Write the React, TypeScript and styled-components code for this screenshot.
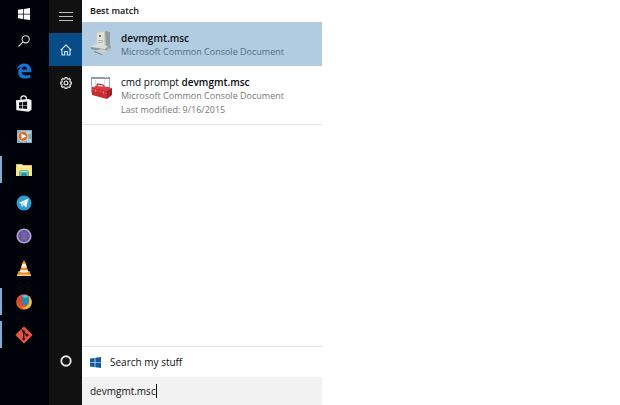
import React, { useState } from "react";
import styled, { createGlobalStyle } from "styled-components";

const GlobalStyle = createGlobalStyle`
  * { box-sizing: border-box; }
  body {
    margin: 0;
    background: #fff;
    color: #111;
    font-family: "Segoe UI", "Open Sans", sans-serif;
    font-size: 10px;
    line-height: 14px;
  }
  button, input { font: inherit; color: inherit; }
  svg { display: block; }
`;

const Desktop = styled.div`
  display: flex;
  min-height: 100vh;
`;

const Taskbar = styled.nav`
  display: flex;
  flex-direction: column;
  flex: 0 0 49px;
  background: #000209;
`;

const TaskButton = styled.button<{ $compact?: boolean; $running?: boolean }>`
  display: flex;
  align-items: center;
  justify-content: center;
  height: ${(p) => (p.$compact ? 27 : 33)}px;
  padding: 0 1px 0 0;
  border: 0;
  background: ${(p) =>
    p.$running
      ? "linear-gradient(#78afd4, #78afd4) left center / 2px 27px no-repeat"
      : "transparent"};
`;

const Rail = styled.nav`
  display: flex;
  flex-direction: column;
  flex: 0 0 33px;
  padding-bottom: 28px;
  background: #111;
`;

const RailButton = styled.button<{ $active?: boolean; $bottom?: boolean }>`
  display: flex;
  align-items: center;
  justify-content: center;
  height: 33px;
  margin-top: ${(p) => (p.$bottom ? "auto" : 0)};
  padding: 0;
  border: 0;
  color: #eee;
  background: ${(p) => (p.$active ? "#074b87" : "transparent")};
`;

const Panel = styled.main`
  display: flex;
  flex-direction: column;
  flex: 0 1 240px;
  background: #fff;
`;

const Heading = styled.h2`
  margin: 0;
  padding: 4px 8px;
  font-size: 9px;
  font-weight: 600;
`;

const Result = styled.button<{ $selected?: boolean }>`
  display: flex;
  align-items: flex-start;
  gap: 8px;
  padding: 9px 8px 7px;
  border: 0;
  text-align: left;
  background: ${(p) => (p.$selected ? "#b1cce1" : "transparent")};
`;

const ResultText = styled.span`
  display: flex;
  flex-direction: column;
  white-space: nowrap;
`;

const Title = styled.span`
  color: #080c10;
  b { font-weight: 600; }
`;

const Detail = styled.span<{ $onBlue?: boolean }>`
  color: ${(p) => (p.$onBlue ? "#516b7e" : "#777")};
  font-size: 9px;
`;

const Divider = styled.hr`
  width: 100%;
  margin: 0;
  border: 0;
  border-top: 1px solid #e3e3e3;
`;

const Space = styled.div`
  flex: 1;
`;

const StuffButton = styled.button`
  display: flex;
  align-items: center;
  gap: 9px;
  height: 30px;
  padding: 0 8px;
  border: 0;
  background: transparent;
`;

const SearchBox = styled.label`
  display: flex;
  align-items: center;
  height: 28px;
  padding: 0 8px;
  background: #f2f2f2;
`;

const SearchInput = styled.input`
  field-sizing: content;
  max-width: 100%;
  padding: 0;
  border: 0;
  outline: 0;
  background: transparent;
  caret-color: transparent;
`;

const Caret = styled.span`
  width: 1px;
  height: 14px;
  background: #111;
`;

const WindowsLogo = ({ color, size }: { color: string; size: number }) => (
  <svg width={size} height={size} viewBox="0 0 12 12" fill={color}>
    <path d="M0 1.7 5.1 1v4.7H0zM5.8.9 12 0v5.7H5.8zM0 6.4h5.1v4.7L0 10.3zM5.8 6.4H12V12l-6.2-.8z" />
  </svg>
);

const SearchIcon = () => (
  <svg width="12" height="12" viewBox="0 0 12 12" fill="none" stroke="#ddd" strokeWidth="1.1">
    <circle cx="7.7" cy="4.3" r="3.6" />
    <path d="M5.1 6.9.5 11.5" />
  </svg>
);

const EdgeIcon = () => (
  <svg width="16" height="16" viewBox="0 0 16 16">
    <path
      fill="#1276d5"
      d="M.8 7.1C1.4 3 4.3.5 8.2.5c4.3 0 7 3 7 7.1v1.7H5.6c.1 2.3 2 3.3 4.4 3.3 1.6 0 3.1-.5 4.3-1.2v3.1c-1.5.8-3.2 1.1-5 1.1-4.3 0-7.1-2.4-7.1-6.2 0-2.5 1.4-4.6 3.7-5.6C3.6 4.3 2 5.4.8 7.1zM5.7 6.5h5.2c0-1.9-.8-3-2.5-3-1.5 0-2.5 1.1-2.7 3z"
    />
  </svg>
);

const StoreIcon = () => (
  <svg width="16" height="17" viewBox="0 0 16 17">
    <path d="M5 5V3c0-1.4.9-2.2 2.6-2.2S10.3 1.6 10.3 3v2" fill="none" stroke="#f4f4f4" strokeWidth="1.2" />
    <path d="M0 5.2 12.7 3.9l2.8 1.3v9.5l-2.8 2L.4 15.2z" fill="#f4f4f4" />
    <path d="m3 7.4 3.2-.4v2.9H3zM6.9 6.9l4.2-.5v3.5H6.9zM3 10.6h3.2v2.9L3 13.2zM6.9 10.6h4.2v3.5l-4.2-.5z" fill="#090b10" />
  </svg>
);

const MediaIcon = () => (
  <svg width="15" height="13" viewBox="0 0 15 13">
    <path fill="#83a9c6" d="M0 0h15v13H0z" />
    <path fill="#b9d0df" d="M9 1h5v3H9zM10 9h4v3h-4z" />
    <circle cx="6" cy="6.3" r="5.4" fill="#f4d3b6" />
    <circle cx="6" cy="6.3" r="4.5" fill="#cb702e" />
    <path fill="#fff" d="m4.5 3.5 5 2.8-5 2.8z" />
  </svg>
);

const FolderIcon = () => (
  <svg width="16" height="14" viewBox="0 0 16 14">
    <path fill="#edbf48" d="M0 1h6l1 1h9v11H0z" />
    <path fill="#fff2a9" d="M1 2h5l1 1h8v3H1z" />
    <path fill="#ffe281" d="M0 4.5h16V13H0z" />
    <path fill="#65b9b5" d="M3 8.5 4.5 7h7L13 8.5V13H3z" />
    <path fill="#2d9496" d="M5.5 10h5v3h-5z" />
    <path fill="#b8e3c5" d="M4.5 8h7v1h-7z" />
  </svg>
);

const TelegramIcon = () => (
  <svg width="16" height="16" viewBox="0 0 16 16">
    <circle cx="8" cy="8" r="7.5" fill="#2c9ed4" />
    <path fill="#fff" d="m3 7.8 9.5-4.2-2.3 9L7.4 10l-1.5 2.1-.5-3.2z" />
    <path fill="#b9dcec" d="m5.4 8.9 5-3.4L7.4 10l-1.5 2.1z" />
  </svg>
);

const PurpleIcon = () => (
  <svg width="16" height="16" viewBox="0 0 16 16">
    <circle cx="8" cy="8" r="6.8" fill="#6c5aa0" stroke="#b0a3d2" strokeWidth="1.6" />
    <path d="M8 2.5v11M5.5 3.5v9M10.5 3.5v9M3 8h10M4 5.5h8M4 10.5h8" stroke="#8274ac" strokeWidth=".5" />
    <ellipse cx="8" cy="8" rx="3.5" ry="5.5" fill="none" stroke="#544486" strokeWidth=".7" />
  </svg>
);

const VlcIcon = () => (
  <svg width="16" height="17" viewBox="0 0 16 17">
    <path fill="#e98a24" d="M2.5 11h11l1.5 5H1z" />
    <path fill="#fbc66d" d="M1.3 14.5h13.4L15 16H1z" />
    <path fill="#ef8d24" d="M7 1.2Q8 .5 9 1.2L12.5 13q-4.5 2-9 0z" />
    <path fill="#fff1dc" d="m6.3 3.5-1.1 3.7q2.8 1 5.6 0L9.7 3.5q-1.7.7-3.4 0zM4.5 9.6l-.7 2.3q4.2 1.6 8.4 0l-.7-2.3q-3.5 1.3-7 0z" />
  </svg>
);

const FirefoxIcon = () => (
  <svg width="16" height="16" viewBox="0 0 16 16">
    <circle cx="8" cy="8" r="7.8" fill="#e65b27" />
    <circle cx="9" cy="6.5" r="5.4" fill="#1c8dc0" />
    <path fill="#f8bd35" d="M12.5 1.8c4 3 4.4 9 .5 11.900-2.400 1.700-5.800 1.500-7.600-.2 4.200.4 6.900-1.700 7.500-5.200.4-2.300.3-4.300-.4-6.500z" />
    <path fill="#dd4b2c" d="M1.3 3.2 3.500 4c1-.7 2.100-.9 3.100-.7L5.400 5l2.800.8-2.500 1.700C5 9.400 7 10.200 9.700 9.300c-.9 2.200-3.300 3.400-5.900 2.300C1.500 10.200.5 6.800 1.300 3.200z" />
    <path fill="#5ec1df" d="M7 1.500c2-.8 4-.3 5.400 1.200L9.500 4 6.300 3z" />
  </svg>
);

const GitIcon = () => (
  <svg width="18" height="18" viewBox="0 0 18 18">
    <path fill="#e65340" d="M8.3 1q.7-.7 1.400 0L17 8.300q.7.700 0 1.400L9.700 17q-.7.700-1.400 0L1 9.700q-.7-.7 0-1.400z" />
    <path d="m6.500 3.300 2.200 2.300v7.200M8.700 6l3.300 3.300" fill="none" stroke="#270f13" strokeWidth="1.200" />
    <g fill="#270f13"><circle cx="8.700" cy="5.700" r="1.400" /><circle cx="8.700" cy="12.800" r="1.400" /><circle cx="12" cy="9.200" r="1.400" /></g>
  </svg>
);

const MenuIcon = () => (
  <svg width="14" height="9" viewBox="0 0 14 9" stroke="#bbb">
    <path d="M0 .5h14M0 4.500h14M0 8.500h14" />
  </svg>
);

const HomeIcon = () => (
  <svg width="12" height="12" viewBox="0 0 12 12" fill="none" stroke="#d9edff" strokeWidth="1.1">
    <path d="M.7 6.200 6 1l5.300 5.200M2 5v6h2.700V7.500h2.600V11H10V5" />
  </svg>
);

const GearIcon = () => (
  <svg width="12" height="12" viewBox="0 0 12 12" fill="none" stroke="#ddd" strokeWidth="1.2">
    <path d="m5.100.6h1.800l.3 1.300.9.400 1.200-.7 1.200 1.200-.7 1.200.3.900 1.300.3v1.700l-1.300.3-.3.900.7 1.200-1.200 1.200-1.200-.7-.9.300-.3 1.300H5.100l-.3-1.300-.9-.3-1.200.7-1.200-1.200.7-1.200-.3-.9-1.300-.3V5.200l1.300-.3.300-.9-.7-1.200 1.200-1.200 1.200.7.900-.4z" />
    <circle cx="6" cy="6" r="1.900" />
  </svg>
);

const RingIcon = () => (
  <svg width="12" height="12" viewBox="0 0 12 12">
    <circle cx="6" cy="6" r="4.700" fill="none" stroke="#e5e5e5" strokeWidth="1.900" />
  </svg>
);

const DeviceIcon = () => (
  <svg width="23" height="24" viewBox="0 0 23 24">
    <path fill="#8f999b" d="m3 17 4-4 14 2-1 4-8 4z" />
    <path fill="#c9ccc8" d="M6 1 14 0l6 1v15l-7 2-7-3z" />
    <path fill="#929b9c" d="m15 0 5 1v15l-4 1z" />
    <path fill="#e0e0da" d="m7 2 7-1v13H7z" />
    <path fill="#aeb4b2" d="M8 9h5v1H8zM8 11h5v1H8z" />
    <path fill="#5d8b58" d="M9 4h2v2H9z" />
    <path fill="#d9dddb" d="m1 16 4-3 13 2-4 4z" />
    <path fill="#8b979a" d="m1 16 13 2v3L1 18z" />
    <path fill="#c9d0ce" d="m4 20 7-2 8 2-7 3z" />
    <path fill="#6e7a7e" d="m4 20 8 3v1l-8-3z" />
    <path fill="#b8c0c0" d="m17 18 3-1 1 2-3 1z" />
  </svg>
);

const ToolboxIcon = () => (
  <svg width="23" height="24" viewBox="0 0 23 24">
    <path fill="#fafcfd" stroke="#9da9b1" d="M1.500 2.500h18v15h-18z" />
    <path fill="#8b9daa" d="M1 2h19v2H1z" />
    <path fill="#d6dfe4" d="M15 2h1v1h-1zM17 2h1v1h-1zM5 5h1v10H5zM14 5h1v8h-1z" />
    <path d="M7 12V10q0-1 1-1l5 1q1 0 1 2v3" fill="none" stroke="#a51b20" strokeWidth="1.200" />
    <path fill="#d93e42" d="m2 12 5-1 12 1 3 2-4 3z" />
    <path fill="#c72b31" d="m2 12 15 4v8L2 20z" />
    <path fill="#a41f26" d="m17 16 5-3v7l-5 4z" />
    <path fill="#df4d4c" d="m2 14 15 4v1L2 15z" />
    <path fill="#df7069" d="M5 14h1v3H5zM13 16h1v3h-1z" />
  </svg>
);

const apps = [
  { name: "Edge", icon: <EdgeIcon /> },
  { name: "Store", icon: <StoreIcon /> },
  { name: "Media Player", icon: <MediaIcon /> },
  { name: "File Explorer", icon: <FolderIcon />, running: true },
  { name: "Telegram", icon: <TelegramIcon /> },
  { name: "Tor", icon: <PurpleIcon /> },
  { name: "VLC", icon: <VlcIcon /> },
  { name: "Firefox", icon: <FirefoxIcon />, running: true },
  { name: "Git", icon: <GitIcon />, running: true },
];

export default function App() {
  const [query, setQuery] = useState("devmgmt.msc");

  return (
    <>
      <GlobalStyle />
      <Desktop>
        <Taskbar aria-label="Taskbar">
          <TaskButton $compact aria-label="Start"><WindowsLogo color="#fff" size={12} /></TaskButton>
          <TaskButton $compact aria-label="Search"><SearchIcon /></TaskButton>
          {apps.map((app) => (
            <TaskButton key={app.name} $running={app.running} aria-label={app.name}>{app.icon}</TaskButton>
          ))}
        </Taskbar>
        <Rail aria-label="Search navigation">
          <RailButton aria-label="Menu"><MenuIcon /></RailButton>
          <RailButton $active aria-label="Home"><HomeIcon /></RailButton>
          <RailButton aria-label="Settings"><GearIcon /></RailButton>
          <RailButton $bottom aria-label="Cortana"><RingIcon /></RailButton>
        </Rail>
        <Panel>
          <Heading>Best match</Heading>
          <Result $selected>
            <DeviceIcon />
            <ResultText>
              <Title><b>devmgmt.msc</b></Title>
              <Detail $onBlue>Microsoft Common Console Document</Detail>
            </ResultText>
          </Result>
          <Result>
            <ToolboxIcon />
            <ResultText>
              <Title>cmd prompt <b>devmgmt.msc</b></Title>
              <Detail>Microsoft Common Console Document</Detail>
              <Detail>Last modified: 9/16/2015</Detail>
            </ResultText>
          </Result>
          <Divider />
          <Space />
          <Divider />
          <StuffButton><WindowsLogo color="#155a9c" size={11} />Search my stuff</StuffButton>
          <SearchBox>
            <SearchInput aria-label="Search" value={query} onChange={(e) => setQuery(e.target.value)} />
            <Caret />
          </SearchBox>
        </Panel>
      </Desktop>
    </>
  );
}
